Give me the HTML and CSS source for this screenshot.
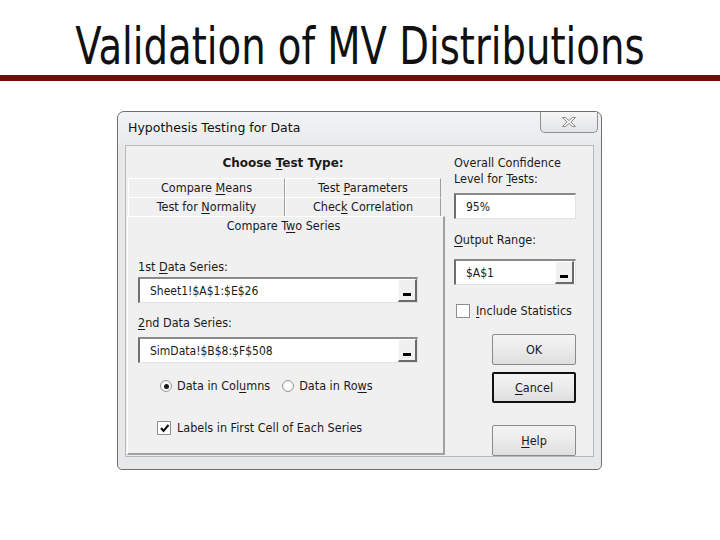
FILE: index.html
```html
<!DOCTYPE html>
<html>
<head>
<meta charset="utf-8">
<link rel="stylesheet" href="styles.css">
</head>
<body>
<div class="title"><span class="title-text">Validation of MV Distributions</span></div>
<div class="rule"></div>
<div class="dialog">
  <div class="titlebar">
    <span class="caption">Hypothesis Testing for Data</span>
    <div class="close">
      <svg width="16" height="12" viewBox="0 0 16 12">
        <path d="M1.5 1.5 L4.5 1.5 L8 4.5 L11.5 1.5 L14.5 1.5 L10 6 L14.5 10.5 L11.5 10.5 L8 7.5 L4.5 10.5 L1.5 10.5 L6 6 Z" fill="#f4f4f4" stroke="#8a8a8a" stroke-width="1" stroke-linejoin="round"/>
      </svg>
    </div>
  </div>
  <div class="client">
    <div class="left">
      <div class="heading">Choose <u>T</u>est Type:</div>
      <div class="tabrow">
        <div class="tab t1">Compare <u>M</u>eans</div>
        <div class="tab t2">Test <u>P</u>arameters</div>
      </div>
      <div class="tabrow">
        <div class="tab t1">Test for <u>N</u>ormality</div>
        <div class="tab t2">Chec<u>k</u> Correlation</div>
      </div>
      <div class="panel">
        <div class="seltab">Compare T<u>w</u>o Series</div>
        <div class="body">
          <div class="lbl l1">1st <u>D</u>ata Series:</div>
          <div class="field wide"><span class="val">Sheet1!$A$1:$E$26</span><div class="pick"><i></i></div></div>
          <div class="lbl l2"><u>2</u>nd Data Series:</div>
          <div class="field wide f2"><span class="val">SimData!$B$8:$F$508</span><div class="pick"><i></i></div></div>
          <div class="radios">
            <span class="radio on"></span><span class="opt">Data in Col<u>u</u>mns</span>
            <span class="radio r2"></span><span class="opt">Data in Ro<u>w</u>s</span>
          </div>
          <div class="checkrow">
            <span class="check on">
              <svg width="11" height="11" viewBox="0 0 11 11"><path d="M2 5 L4.5 8 L9.5 2" fill="none" stroke="#111" stroke-width="2"/></svg>
            </span><span class="opt">Labels in First Cell of Each Series</span>
          </div>
        </div>
      </div>
    </div>
    <div class="right">
      <div class="lbl r-l1">Overall Confidence<br>Level for <u>T</u>ests:</div>
      <div class="field narrow"><span class="val">95%</span></div>
      <div class="lbl r-l2"><u>O</u>utput Range:</div>
      <div class="field narrow f4"><span class="val">$A$1</span><div class="pick"><i></i></div></div>
      <div class="checkrow stats"><span class="check"></span><span class="opt"><u>I</u>nclude Statistics</span></div>
      <div class="btn ok">OK</div>
      <div class="btn cancel"><u>C</u>ancel</div>
      <div class="btn help"><u>H</u>elp</div>
    </div>
  </div>
</div>
</body>
</html>
```
FILE: styles.css
```css
html, body {
  margin: 0;
  padding: 0;
  background: #ffffff;
}
body {
  width: 720px;
  height: 540px;
  overflow: hidden;
  font-family: "DejaVu Sans Condensed", "DejaVu Sans", sans-serif;
  font-size: 12.5px;
  color: #1a1a1a;
}
u { text-decoration: underline; text-underline-offset: 2px; }

.title {
  height: 59px;
  padding-top: 16px;
  line-height: 60px;
  text-align: center;
  white-space: nowrap;
}
.title-text {
  display: inline-block;
  font-family: "DejaVu Sans Condensed", "DejaVu Sans", sans-serif;
  font-size: 52px;
  color: #111;
  transform: scaleX(0.825);
  transform-origin: center;
}
.rule {
  height: 6px;
  background: #7a0a0a;
}

.dialog {
  margin: 30px 0 0 117px;
  width: 483px;
  height: 357px;
  border: 1px solid #6f6f6f;
  border-radius: 7px 7px 5px 5px;
  background: linear-gradient(#f2f3f4, #e6e8ea 40px, #e6e8ea);
  display: flex;
  flex-direction: column;
}
.titlebar {
  height: 33px;
  display: flex;
  justify-content: space-between;
  align-items: flex-start;
  flex: none;
}
.caption {
  padding: 8px 0 0 10px;
  line-height: 16px;
  font-family: "DejaVu Sans", sans-serif;
  font-size: 12.5px;
  color: #111;
}
.close {
  width: 56px;
  height: 20px;
  margin-right: 3px;
  border: 1px solid #8f8f8f;
  border-top: none;
  border-radius: 0 0 5px 5px;
  background: linear-gradient(#f6f6f6, #e2e4e6);
  display: flex;
  align-items: center;
  justify-content: center;
}

.client {
  margin: 0 7px 0 7px;
  height: 310px;
  border: 1px solid #b8b8b8;
  background: #f0f0f0;
  display: flex;
}
.left {
  width: 320px;
  flex: none;
}
.heading {
  height: 32px;
  box-sizing: border-box;
  padding-top: 9px;
  padding-right: 6px;
  line-height: 16px;
  font-family: "DejaVu Sans", sans-serif;
  font-size: 12px;
  font-weight: bold;
  text-align: center;
}
.tabrow {
  display: flex;
  height: 19px;
  margin-left: 2px;
}
.tab {
  box-sizing: border-box;
  height: 19px;
  line-height: 18px;
  text-align: center;
  border-top: 1px solid #ffffff;
  border-left: 1px solid #ffffff;
  border-right: 1px solid #a0a0a0;
  background: #f0f0f0;
}
.tab.t1 { width: 157px; }
.tab.t2 { width: 156px; }

.panel {
  margin-left: 1px;
  width: 318px;
  height: 239px;
  box-sizing: border-box;
  border-top: 1px solid #ffffff;
  border-left: 1px solid #ffffff;
  border-right: 2px solid #a0a0a0;
  border-bottom: 2px solid #a0a0a0;
}
.seltab {
  height: 18px;
  line-height: 18px;
  text-align: center;
  padding-right: 4px;
}
.body {
  padding-left: 10px;
}
.lbl {
  line-height: 16px;
}
.l1 { margin-top: 24px; }
.l2 { margin-top: 12px; }

.field {
  box-sizing: border-box;
  height: 26px;
  background: #ffffff;
  border-top: 2px solid #8a8a8a;
  border-left: 2px solid #6e6e6e;
  border-bottom: 1px solid #e2e2e2;
  border-right: 1px solid #e2e2e2;
  display: flex;
  align-items: center;
  justify-content: space-between;
}
.field .val {
  padding-left: 10px;
  line-height: 16px;
  font-size: 12px;
}
.field.wide {
  width: 280px;
  margin-top: 2px;
}
.field.f2 { margin-top: 6px; }
.pick {
  box-sizing: border-box;
  width: 19px;
  height: 23px;
  margin-top: -1px;
  background: #f0f0f0;
  border-top: 1px solid #ffffff;
  border-left: 1px solid #ffffff;
  border-right: 2px solid #6a6a6a;
  border-bottom: 2px solid #6a6a6a;
  display: flex;
  align-items: flex-end;
  justify-content: center;
  padding-bottom: 4px;
}
.pick i {
  display: block;
  width: 8px;
  height: 3px;
  background: #000;
}

.radios {
  margin-top: 15px;
  height: 16px;
  display: flex;
  align-items: center;
  padding-left: 22px;
}
.radio {
  box-sizing: border-box;
  width: 12px;
  height: 12px;
  border-radius: 50%;
  border: 1px solid #9a9a9a;
  background: radial-gradient(circle, #ffffff 40%, #e6e6e6);
  display: inline-flex;
  align-items: center;
  justify-content: center;
  margin-right: 5px;
}
.radio.on::after {
  content: "";
  width: 5px;
  height: 5px;
  border-radius: 50%;
  background: #1a1a1a;
}
.radio.r2 { margin-left: 12px; }
.opt { line-height: 16px; }

.checkrow {
  display: flex;
  align-items: center;
  height: 16px;
  margin-top: 26px;
  padding-left: 19px;
}
.check {
  box-sizing: border-box;
  width: 14px;
  height: 14px;
  border: 1px solid #8e8e8e;
  background: #ffffff;
  margin-right: 6px;
  display: inline-flex;
  align-items: center;
  justify-content: center;
}

.right {
  margin-left: 8px;
  width: 130px;
}
.r-l1 { margin-top: 9px; }
.field.narrow {
  width: 122px;
  margin-top: 6px;
}
.r-l2 { margin-top: 13px; }
.field.f4 { margin-top: 11px; }
.field.f4 .pick { margin-right: 1px; }
.checkrow.stats {
  margin-top: 18px;
  padding-left: 2px;
}

.btn {
  box-sizing: border-box;
  width: 84px;
  height: 31px;
  margin-left: 38px;
  border: 1px solid #8a8a8a;
  border-radius: 2px;
  background: linear-gradient(#f4f4f4, #ebebeb 50%, #dedede);
  text-align: center;
  line-height: 29px;
}
.btn.ok { margin-top: 15px; }
.btn.cancel {
  margin-top: 7px;
  border: 2px solid #111;
  line-height: 27px;
}
.btn.help { margin-top: 22px; }
```
